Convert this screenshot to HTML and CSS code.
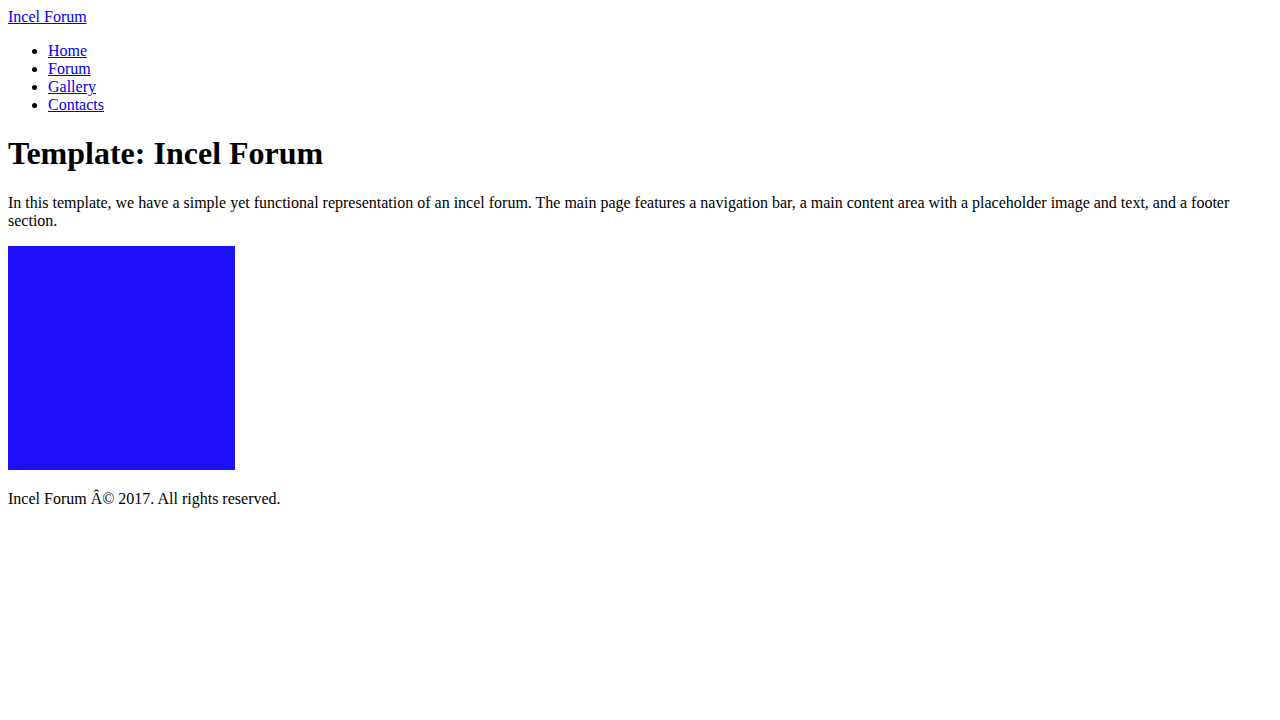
FILE: index.html
```html
<!DOCTYPE html>
<html>
<head>
<meta charset="utf-8">
<title>Incel Forum</title>
<link rel="stylesheet" href="styles.css">
</head>
<body class="page">
<header class="site-header">
<div class="brand"><a class="brand-link" href="#">Incel Forum</a></div>
<nav class="nav">
<ul class="nav-list">
<li><a href="#">Home</a></li>
<li><a href="#">Forum</a></li>
<li><a href="#">Gallery</a></li>
<li><a href="#">Contacts</a></li>
</ul>
</nav>
</header>
<main class="content">
<h1 class="title">Template: Incel Forum</h1>
<p class="intro">In this template, we have a simple yet functional representation of an incel forum. The main page features a navigation bar, a main content area with a placeholder image and text, and a footer section.</p>
<div class="figure"><span class="placeholder"></span></div>
</main>
<footer class="footer">
<p class="footer-text">Incel Forum Â© 2017. All rights reserved.</p>
</footer>
</body>
</html>
```
FILE: styles.css
```css
.page {
  margin: 8px;
  font-family: "Liberation Serif", "Times New Roman", serif;
  font-size: 16px;
  color: #000;
  background: #fff;
}
a {
  color: #0000ee;
}
.nav-list {
  margin: 16px 0;
  padding-left: 40px;
}
.title {
  font-size: 32px;
  margin: 21.44px 0;
}
.intro {
  margin: 16px 0;
}
.placeholder {
  display: inline-block;
  vertical-align: baseline;
  width: 227px;
  height: 224px;
  background: #1e10fa;
}
.footer-text {
  margin: 16px 0;
}
```
